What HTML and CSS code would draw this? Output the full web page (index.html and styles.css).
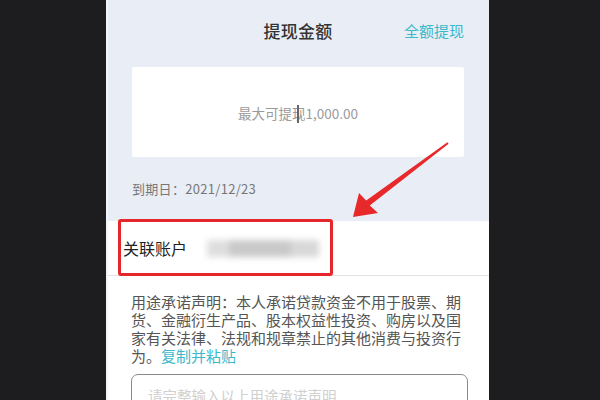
FILE: index.html
```html
<!DOCTYPE html>
<html lang="zh">
<head>
<meta charset="utf-8">
<link rel="stylesheet" href="styles.css">
</head>
<body>
<div class="stage">
  <div class="side"></div>
  <div class="phone">
    <section class="top">
      <div class="titlebar">
        <span class="title">提现金额</span>
        <span class="all">全额提现</span>
      </div>
      <div class="card">
        <span class="hint">最大可提现1,000.00</span>
        <span class="cursor"></span>
      </div>
      <div class="due">到期日：2021/12/23</div>
    </section>
    <section class="bottom">
      <div class="account">
        <span class="label">关联账户</span>
        <span class="blur"><i class="b1"></i><i class="b2"></i><i class="b3"></i></span>
      </div>
      <p class="notice">用途承诺声明：本人承诺贷款资金不用于股票、期货、金融衍生产品、股本权益性投资、购房以及国家有关法律、法规和规章禁止的其他消费与投资行为。<span class="copy">复制并粘贴</span></p>
      <div class="input"><span class="ph">请完整输入以上用途承诺声明</span></div>
    </section>
    <div class="redbox"></div>
    <svg class="arrow" width="110" height="90" viewBox="0 0 110 90">
      <polygon points="5,79 11,55 18.2,62.6 99.4,4.2 100.6,5.8 21.8,67.4 30,75" fill="#e8292b"/>
    </svg>
  </div>
  <div class="side"></div>
</div>
</body>
</html>
```
FILE: styles.css
```css
html, body {
  margin: 0;
  padding: 0;
  background: #1d1c1f;
}
body {
  font-family: "Noto Sans CJK SC", "Noto Sans", sans-serif;
}
.stage {
  display: flex;
  width: 600px;
  height: 400px;
  overflow: hidden;
}
.side {
  background: #1d1c1f;
  flex: 0 0 106px;
}
.side:last-child {
  flex: 1 1 auto;
}
.phone {
  position: relative;
  flex: 0 0 383px;
  display: flex;
  flex-direction: column;
  background: #ffffff;
  border-left: 2px solid #f4f4f4;
  box-sizing: border-box;
  overflow: hidden;
}
.phone > section {
  flex-shrink: 0;
}
.top {
  background: #e9eef6;
  height: 221px;
  padding: 0 25px 0 24px;
  display: flex;
  flex-direction: column;
}
.titlebar {
  height: 67px;
  flex-shrink: 0;
  display: flex;
  align-items: center;
  justify-content: center;
  position: relative;
  padding-bottom: 6px;
  box-sizing: border-box;
}
.title {
  font-size: 17px;
  color: #333;
  font-weight: 500;
  letter-spacing: 0.3px;
}
.all {
  position: absolute;
  right: 0;
  font-size: 15px;
  color: #3cb8ca;
}
.card {
  position: relative;
  flex-shrink: 0;
  background: #fff;
  height: 90px;
  display: flex;
  align-items: center;
  justify-content: center;
  border-radius: 2px;
}
.hint {
  font-size: 13.5px;
  color: #9a9a9a;
  padding-top: 2px;
}
.cursor {
  position: absolute;
  left: 165px;
  top: 38px;
  width: 1.5px;
  height: 18px;
  background: #666;
}
.due {
  margin-top: 22px;
  font-size: 13px;
  color: #777;
  letter-spacing: 0.3px;
}
.bottom {
  display: flex;
  flex-direction: column;
}
.account {
  height: 55px;
  flex-shrink: 0;
  display: flex;
  align-items: center;
  padding-left: 15px;
  border-bottom: 1px solid #e3e3e3;
  box-sizing: border-box;
}
.label {
  font-size: 16px;
  color: #222;
}
.blur {
  margin-left: 20px;
  display: flex;
  align-items: center;
  filter: blur(3px);
  height: 22px;
}
.blur i {
  display: block;
  height: 17px;
  background: #c9c9c9;
}
.b1 { width: 22px; background: #dedede !important; }
.b2 { width: 62px; }
.b3 { width: 28px; background: #d8d8d8 !important; }
.notice {
  margin: 17px 0 0;
  padding: 0 22px 0 23px;
  font-size: 15px;
  line-height: 18px;
  color: #555;
}
.copy {
  color: #3cb8ca;
}
.input {
  margin: 9px 21px 0 23px;
  height: 40px;
  flex-shrink: 0;
  border: 1.5px solid #8a8a8a;
  border-radius: 7px;
  padding: 8px 16px 0;
  box-sizing: border-box;
}
.ph {
  font-size: 14.5px;
  color: #d0d0d0;
}
.redbox {
  position: absolute;
  left: 10px;
  top: 219px;
  width: 215px;
  height: 57px;
  border: 3px solid #e5262a;
  border-radius: 3px;
  box-sizing: border-box;
}
.arrow {
  position: absolute;
  left: 240px;
  top: 138px;
}
```
